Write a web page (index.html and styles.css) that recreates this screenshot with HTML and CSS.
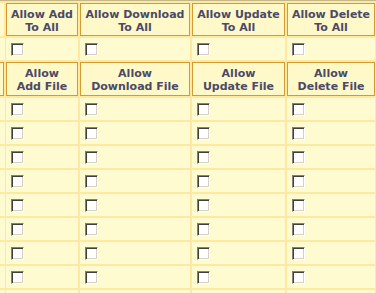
FILE: index.html
```html
<!DOCTYPE html>
<html>
<head>
<meta charset="utf-8">
<link rel="stylesheet" href="styles.css">
</head>
<body>
<div class="frame">
  <div class="grid">
    <div class="cell edge"></div>
    <div class="head">Allow Add<br>To All</div>
    <div class="head">Allow Download<br>To All</div>
    <div class="head">Allow Update<br>To All</div>
    <div class="head">Allow Delete<br>To All</div>

    <div class="cell"></div>
    <div class="cell"><span class="cb"></span></div>
    <div class="cell"><span class="cb"></span></div>
    <div class="cell"><span class="cb"></span></div>
    <div class="cell"><span class="cb"></span></div>

    <div class="head edge-head"></div>
    <div class="head">Allow<br>Add File</div>
    <div class="head">Allow<br>Download File</div>
    <div class="head">Allow<br>Update File</div>
    <div class="head">Allow<br>Delete File</div>

    <div class="cell"></div><div class="cell"><span class="cb"></span></div><div class="cell"><span class="cb"></span></div><div class="cell"><span class="cb"></span></div><div class="cell"><span class="cb"></span></div>
    <div class="cell"></div><div class="cell"><span class="cb"></span></div><div class="cell"><span class="cb"></span></div><div class="cell"><span class="cb"></span></div><div class="cell"><span class="cb"></span></div>
    <div class="cell"></div><div class="cell"><span class="cb"></span></div><div class="cell"><span class="cb"></span></div><div class="cell"><span class="cb"></span></div><div class="cell"><span class="cb"></span></div>
    <div class="cell"></div><div class="cell"><span class="cb"></span></div><div class="cell"><span class="cb"></span></div><div class="cell"><span class="cb"></span></div><div class="cell"><span class="cb"></span></div>
    <div class="cell"></div><div class="cell"><span class="cb"></span></div><div class="cell"><span class="cb"></span></div><div class="cell"><span class="cb"></span></div><div class="cell"><span class="cb"></span></div>
    <div class="cell"></div><div class="cell"><span class="cb"></span></div><div class="cell"><span class="cb"></span></div><div class="cell"><span class="cb"></span></div><div class="cell"><span class="cb"></span></div>
    <div class="cell"></div><div class="cell"><span class="cb"></span></div><div class="cell"><span class="cb"></span></div><div class="cell"><span class="cb"></span></div><div class="cell"><span class="cb"></span></div>
    <div class="cell"></div><div class="cell"><span class="cb"></span></div><div class="cell"><span class="cb"></span></div><div class="cell"><span class="cb"></span></div><div class="cell"><span class="cb"></span></div>
    <div class="cell"></div><div class="cell"><span class="cb"></span></div><div class="cell"><span class="cb"></span></div><div class="cell"><span class="cb"></span></div><div class="cell"><span class="cb"></span></div>
  </div>
</div>
</body>
</html>
```
FILE: styles.css
```css
html, body {
  margin: 0;
  padding: 0;
  background: #ffe9a0;
  overflow: hidden;
}
.frame {
  width: 376px;
  height: 293px;
  overflow: hidden;
  border-top: 1px solid #c4b888;
  padding-top: 2px;
  box-sizing: border-box;
}
.grid {
  display: grid;
  grid-template-columns: 4px 72px 110px 93px 88px;
  grid-template-rows: 33px 22px 34px repeat(9, 22px);
  gap: 2px;
  background: #ffe9a0;
  font-family: "DejaVu Sans", Verdana, sans-serif;
  font-size: 11px;
  font-weight: bold;
  color: #4a4a68;
}
.cell {
  background: #fffbd0;
  display: flex;
  align-items: center;
  padding-left: 5px;
  box-sizing: border-box;
}
.edge {
  padding: 0;
}
.head {
  background: #fff8c8;
  border: 1px solid #d49a34;
  box-sizing: border-box;
  display: flex;
  align-items: center;
  justify-content: center;
  text-align: center;
  line-height: 13px;
  padding-top: 2px;
  white-space: nowrap;
}
.edge-head {
  border-left: none;
}
.cb {
  display: block;
  width: 13px;
  height: 13px;
  box-sizing: border-box;
  background: #fff;
  border: 1px solid;
  border-color: #808080 #ffffff #ffffff #808080;
  box-shadow: inset 1px 1px 0 #404040, inset -1px -1px 0 #d4d0c8;
}
```
